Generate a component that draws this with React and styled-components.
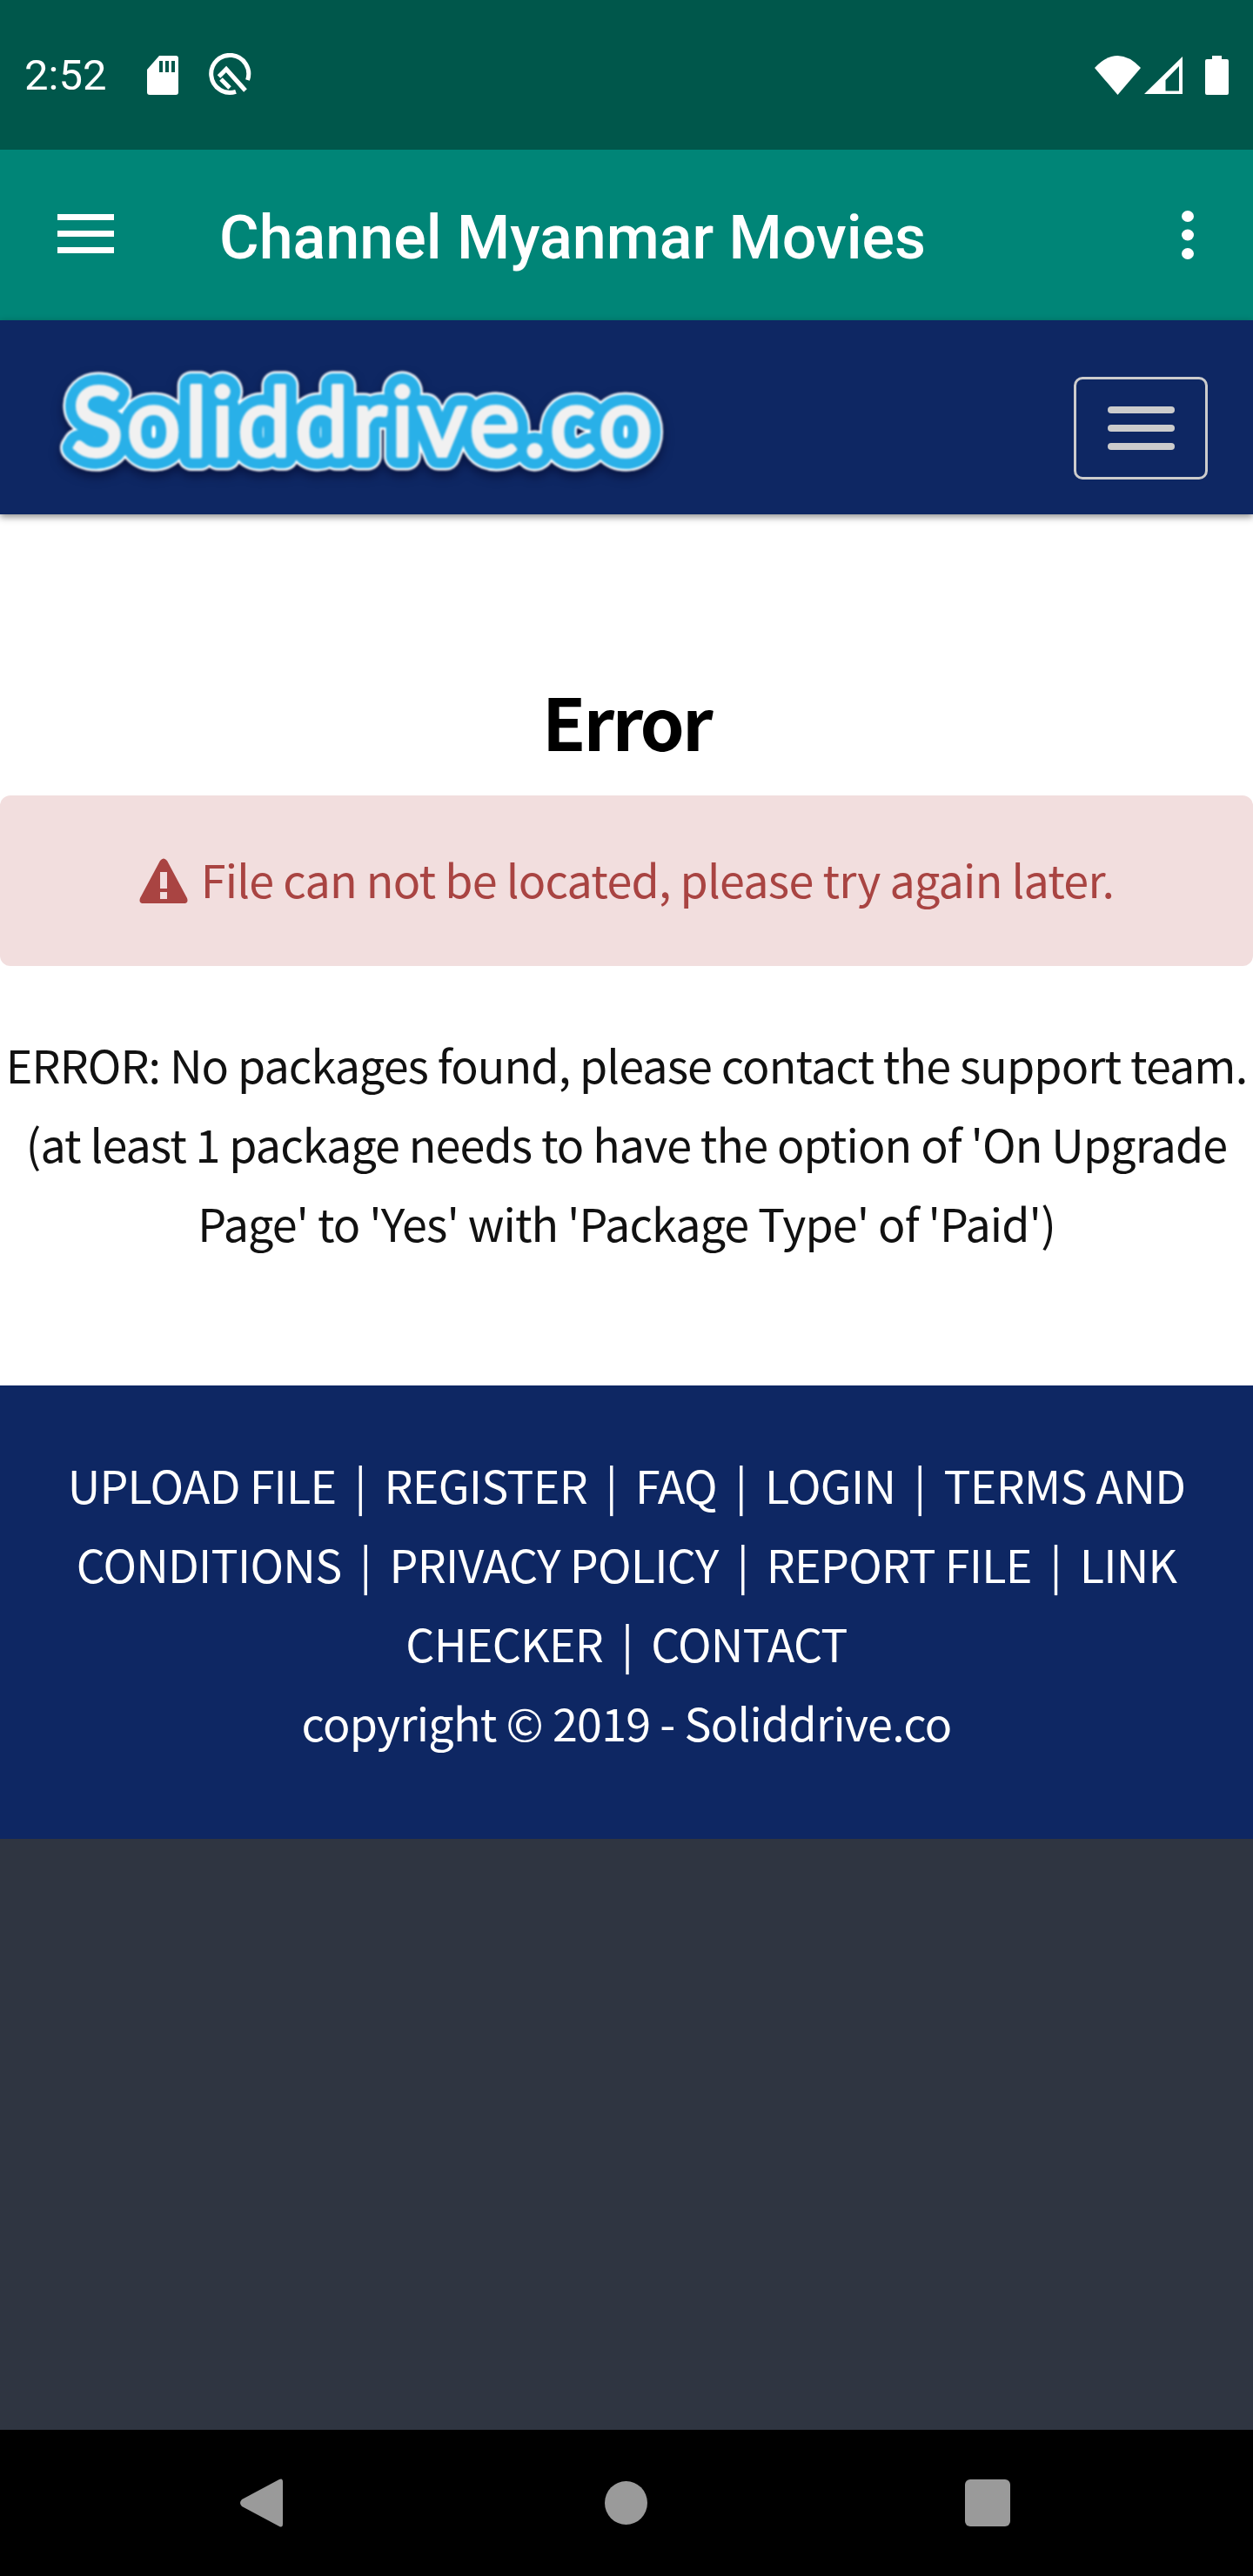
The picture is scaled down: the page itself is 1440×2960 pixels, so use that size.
import React from 'react'
import styled, { createGlobalStyle } from 'styled-components'

const Global = createGlobalStyle`
  html, body { margin: 0; padding: 0; background: #2f3541; }
  * { box-sizing: border-box; }
`

const Screen = styled.div`
  width: 1440px;
  height: 2960px;
  display: flex;
  flex-direction: column;
  background: #2f3541;
  font-family: "Noto Sans CJK SC", "Noto Sans", sans-serif;
  overflow: hidden;
`

const StatusBar = styled.div`
  height: 172px;
  flex: none;
  background: #00574b;
  display: flex;
  align-items: center;
  justify-content: space-between;
  padding: 0 28px 0 28px;
  color: #fff;
`
const StatusGroup = styled.div`
  display: flex;
  align-items: center;
`
const Clock = styled.span`
  font: 400 49px Roboto, sans-serif;
  width: 141px;
`
const StatusIcon = styled.svg`
  display: block;
  flex: none;
  margin-left: ${p => p.$left || 0}px;
`
const AppBar = styled.div`
  height: 196px;
  flex: none;
  background: #008577;
  display: flex;
  align-items: center;
  color: #fff;
  padding: 0 68px 3px 66px;
`
const AppTitle = styled.div`
  font: 500 70px Roboto, sans-serif;
  margin-left: 121px;
  padding-top: 9px;
  flex: 1;
`
const MenuDots = styled.svg`
  display: block;
  margin-top: 3px;
`
const SiteNav = styled.div`
  height: 223px;
  flex: none;
  background: #0e2763;
  display: flex;
  align-items: center;
  justify-content: space-between;
  padding: 12px 52px 0 50px;
  box-shadow: 0 3px 8px rgba(0,0,0,.45);
  position: relative;
`
const LogoArt = styled.svg`
  display: block;
  overflow: visible;
  filter: blur(.8px) drop-shadow(0 6px 6px rgba(0,0,30,.5));
`
const Toggler = styled.div`
  width: 154px;
  height: 118px;
  margin-top: 12px;
  border: 3px solid #ccc;
  border-radius: 10px;
  display: flex;
  flex-direction: column;
  justify-content: center;
  align-items: center;
  gap: 13px;
`
const TogglerLine = styled.div`
  width: 77px;
  height: 8px;
  border-radius: 4px;
  background: #ccc;
`
const Main = styled.div`
  background: #fff;
  height: 1001px;
  flex: none;
  text-align: center;
  padding-top: 187px;
`
const Heading = styled.h1`
  margin: 0;
  font-size: 82px;
  font-weight: 700;
  letter-spacing: -2.8px;
  line-height: 100px;
  color: #000;
`
const Alert = styled.div`
  margin-top: 36px;
  height: 196px;
  background: #f2dede;
  color: #a94442;
  border-radius: 12px;
  display: flex;
  align-items: center;
  justify-content: center;
  gap: 15px;
  font-size: 52px;
  letter-spacing: -.75px;
`
const AlertText = styled.span`
  padding-bottom: 6px;
`
const Note = styled.div`
  margin-top: 67px;
  font-size: 52px;
  letter-spacing: -.9px;
  line-height: 91px;
  color: #111;
`
const Footer = styled.div`
  height: 521px;
  flex: none;
  background: #0e2763;
  color: #fff;
  text-align: center;
  font-size: 52px;
  letter-spacing: -.75px;
  line-height: 91px;
  padding: 68px 60px 0;
`
const FooterSep = styled.span`
  margin: 0 10px;
`
const Rest = styled.div`
  flex: 1;
`
const NavBar = styled.div`
  height: 168px;
  flex: none;
  background: #000;
  display: flex;
  align-items: center;
`

const links = ['UPLOAD FILE', 'REGISTER', 'FAQ', 'LOGIN', 'TERMS AND', 'CONDITIONS', 'PRIVACY POLICY', 'REPORT FILE', 'LINK', 'CHECKER', 'CONTACT']
// the two links that wrap are split so each line part is its own text
const noSep = ['TERMS AND', 'LINK']

const Logo = () => (
  <LogoArt width="708" height="130" viewBox="0 0 708 130">
    <defs>
      <text id="logo-word" x="32" y="103" textLength="668" lengthAdjust="spacing" fontFamily="Lato, sans-serif" fontSize="110" strokeLinejoin="round">Soliddrive.co</text>
    </defs>
    <use href="#logo-word" fill="#fff" stroke="#fff" strokeWidth="33" />
    <use href="#logo-word" fill="#29b0e8" stroke="#29b0e8" strokeWidth="28" />
    <use href="#logo-word" fill="#f1f1f1" stroke="#f1f1f1" strokeWidth="4" />
  </LogoArt>
)

export default function App() {
  return (
    <Screen>
      <Global />
      <StatusBar>
        <StatusGroup>
          <Clock>2:52</Clock>
          <StatusIcon width="36" height="45" viewBox="0 0 36 45" fill="#fff"><path d="M14 0h19a3 3 0 0 1 3 3v39a3 3 0 0 1-3 3H3a3 3 0 0 1-3-3V16z" /><path d="M14 6h4v13h-4zM21 6h4v13h-4zM28 6h4v13h-4z" fill="#00574b" /></StatusIcon>
          <StatusIcon $left={35} width="50" height="50" viewBox="0 0 50 50" fill="none" stroke="#fff" strokeWidth="5"><path d="M31 44.300A21.500 21.500 0 1 1 44.500 31" /><path d="M11.500 27L20 18.500 42 43" /><path d="M14 30L24 40" /></StatusIcon>
        </StatusGroup>
        <StatusGroup>
          <StatusIcon width="53" height="45" viewBox="0 0 53 45" fill="#fff"><path d="M0 14Q26.500 -14 53 14L26.500 45z" /></StatusIcon>
          <StatusIcon $left={4} width="45" height="43" viewBox="0 0 45 43" fill="#fff"><path fillRule="evenodd" d="M44 0v43H0zM40 11L24.500 27v12.500H40z" /></StatusIcon>
          <StatusIcon $left={25} width="27" height="45" viewBox="0 0 27 45" fill="#fff"><path d="M8 0h11v4h6a2 2 0 0 1 2 2v37a2 2 0 0 1-2 2H2a2 2 0 0 1-2-2V6a2 2 0 0 1 2-2h6z" /></StatusIcon>
        </StatusGroup>
      </StatusBar>
      <AppBar>
        <svg width="65" height="45" viewBox="0 0 65 45" fill="#fff"><path d="M0 0h65v7H0zM0 19h65v7H0zM0 38h65v7H0z" /></svg>
        <AppTitle>Channel Myanmar Movies</AppTitle>
        <MenuDots width="14" height="56" viewBox="0 0 14 56" fill="#fff"><ellipse cx="7" cy="6.500" rx="7" ry="6.500" /><ellipse cx="7" cy="28" rx="7" ry="6.500" /><ellipse cx="7" cy="49.500" rx="7" ry="6.500" /></MenuDots>
      </AppBar>
      <SiteNav>
        <Logo />
        <Toggler>
          <TogglerLine />
          <TogglerLine />
          <TogglerLine />
        </Toggler>
      </SiteNav>
      <Main>
        <Heading>Error</Heading>
        <Alert>
          <svg width="56" height="52" viewBox="0 0 56 52" fill="#a94442"><path fillRule="evenodd" d="M24 3q4-5 8 0l23 43q2 6-4 6H5q-6 0-4-6zM24 16v19h8V16zM24 39v8h8v-8z" /></svg>
          <AlertText>File can not be located, please try again later.</AlertText>
        </Alert>
        <Note>
          ERROR: No packages found, please contact the support team.<br />
          (at least 1 package needs to have the option of 'On Upgrade<br />
          Page' to 'Yes' with 'Package Type' of 'Paid')
        </Note>
      </Main>
      <Footer>
        {links.map((l, i) => (
          <React.Fragment key={l}>
            <span>{l}</span>{' '}
            {i < links.length - 1 && !noSep.includes(l) && <><FooterSep>|</FooterSep>{' '}</>}
          </React.Fragment>
        ))}
        <br />
        copyright © 2019 - Soliddrive.co
      </Footer>
      <Rest />
      <NavBar>
        <StatusIcon $left={275} width="50" height="56" viewBox="0 0 50 56" fill="#9a9a9a"><path d="M46 1Q50 -1 50 4V52Q50 57 46 55L3 32Q-1 28 3 24z" /></StatusIcon>
        <StatusIcon $left={370} width="49" height="50" viewBox="0 0 49 50" fill="#9a9a9a"><ellipse cx="24.500" cy="25" rx="24.500" ry="25" /></StatusIcon>
        <StatusIcon $left={365} width="52" height="54" viewBox="0 0 52 54" fill="#9a9a9a"><rect width="52" height="54" rx="6" /></StatusIcon>
      </NavBar>
    </Screen>
  )
}
